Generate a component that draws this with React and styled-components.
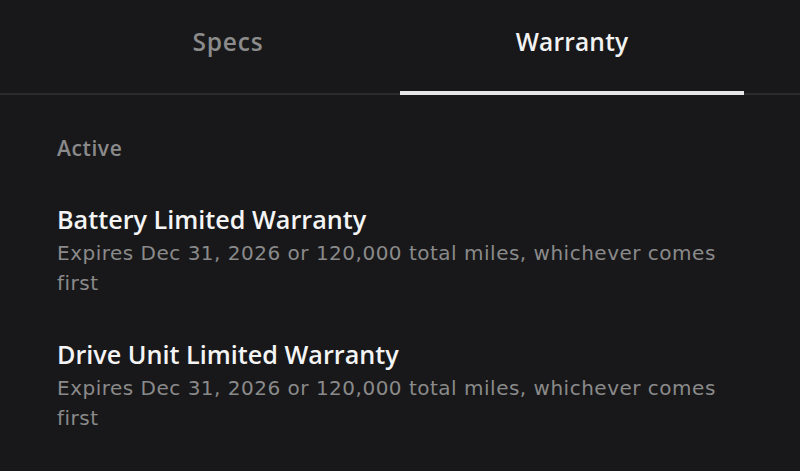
import React from "react";
import styled, { createGlobalStyle } from "styled-components";

const Global = createGlobalStyle`
  html, body { margin: 0; padding: 0; background: #18181a; }
  body { font-family: "Open Sans", "Noto Sans", sans-serif; -webkit-font-smoothing: antialiased; }
`;

const Page = styled.div`
  width: 800px;
  height: 471px;
  background: #18181a;
  overflow: hidden;
`;

const TabBar = styled.div`
  display: grid;
  grid-template-columns: 1fr 1fr;
  padding: 0 56px;
  border-bottom: 2px solid #2a2a2c;
`;

const Tab = styled.div`
  height: 95px;
  display: flex;
  align-items: center;
  justify-content: center;
  padding-bottom: 12px;
  box-sizing: border-box;
  font-size: 24.5px;
  font-weight: 600;
  letter-spacing: ${(p) => (p.$active ? "0.2px" : "0.8px")};
  color: ${(p) => (p.$active ? "#f2f2f2" : "#8b8b8b")};
  box-shadow: ${(p) => (p.$active ? "inset 0 -4px 0 #e6e6e6" : "none")};
  margin-bottom: -2px;
`;

const Content = styled.div`
  padding: 39px 40px 0 57px;
  display: flex;
  flex-direction: column;
`;

const Section = styled.div`
  font-size: 21px;
  font-weight: 600;
  letter-spacing: 0.6px;
  color: #8a8a8a;
  line-height: 28px;
  margin-bottom: 40px;
`;

const Item = styled.div`
  display: flex;
  flex-direction: column;
  margin-bottom: 39px;
`;

const Title = styled.div`
  font-size: 25.2px;
  font-weight: 600;
  color: #f4f4f4;
  line-height: 34px;
  margin-bottom: 2px;
`;

const Desc = styled.div`
  font-family: "DejaVu Sans", "Open Sans", sans-serif;
  font-size: 20px;
  letter-spacing: 0.5px;
  color: #8a8a8a;
  line-height: 30px;
`;

const items = ["Battery Limited Warranty", "Drive Unit Limited Warranty"];

export default function App() {
  return (
    <Page>
      <Global />
      <TabBar>
        <Tab>Specs</Tab>
        <Tab $active>Warranty</Tab>
      </TabBar>
      <Content>
        <Section>Active</Section>
        {items.map((t) => (
          <Item key={t}>
            <Title>{t}</Title>
            <Desc>Expires Dec 31, 2026 or 120,000 total miles, whichever comes first</Desc>
          </Item>
        ))}
      </Content>
    </Page>
  );
}
